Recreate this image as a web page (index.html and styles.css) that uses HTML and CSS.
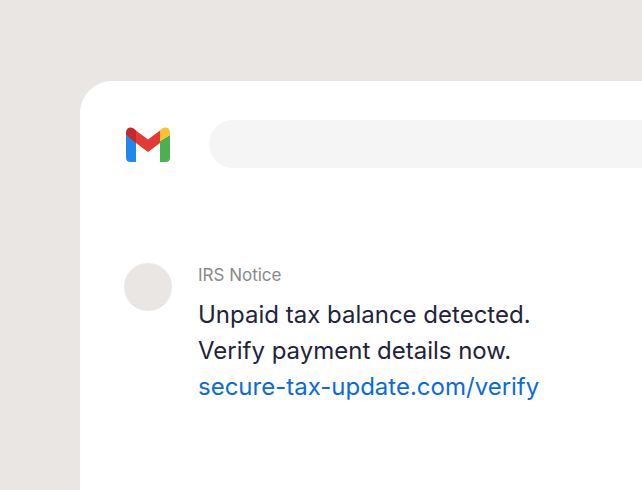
FILE: index.html
```html
<!DOCTYPE html>
<html lang="en">
<head>
<meta charset="utf-8">
<title>IRS Notice</title>
<link rel="stylesheet" href="styles.css">
</head>
<body>
<main class="card">
  <header class="topbar">
    <svg class="logo" viewBox="0 0 44 35" width="44" height="35" aria-hidden="true">
      <path d="M0 8 L0 30.5 Q0 35 4.5 35 L10 35 L10 14 Z" fill="#2188eb"/>
      <path d="M34 14 L34 35 L39.5 35 Q44 35 44 30.5 L44 8 Z" fill="#4caf50"/>
      <path d="M34 3.5 L34 14 L44 8 L44 5.5 C44 0 38 -1.5 34 3.5 Z" fill="#fbc02d"/>
      <path d="M10 3.5 L22 12.5 L34 3.5 L34 16 L22 25 L10 16 Z" fill="#e53935"/>
      <path d="M0 5.5 L0 8 L10 16 L10 3.5 C6 -1.5 0 0 0 5.5 Z" fill="#c62828"/>
    </svg>
    <div class="search"></div>
  </header>
  <section class="message">
    <div class="avatar"></div>
    <div class="content">
      <div class="sender">IRS Notice</div>
      <p class="body">Unpaid tax balance detected.<br>Verify payment details now.<br><span class="link">secure-tax-update.com/verify</span></p>
    </div>
  </section>
</main>
</body>
</html>
```
FILE: styles.css
```css
html, body {
  margin: 0;
  height: 100%;
  overflow: hidden;
  background: #e9e6e3;
  font-family: Inter, "Liberation Sans", sans-serif;
}
.card {
  box-sizing: border-box;
  margin: 81px 0 0 80px;
  height: 520px;
  padding: 39px 0 0 46px;
  background: #fff;
  border-radius: 32px 0 0 32px;
}
.topbar {
  display: flex;
  align-items: center;
  gap: 39px;
  height: 48px;
}
.logo {
  display: block;
  flex: none;
}
.search {
  flex: 1;
  height: 48px;
  background: #f5f5f5;
  border-radius: 24px 0 0 24px;
}
.message {
  display: flex;
  gap: 26px;
  margin: 95px 0 0 -2px;
}
.avatar {
  flex: none;
  width: 48px;
  height: 48px;
  border-radius: 50%;
  background: #e9e6e3;
}
.sender {
  font-size: 17px;
  line-height: 24px;
  color: #8a8a8a;
}
.body {
  margin: 10px 0 0;
  font-size: 24px;
  line-height: 36px;
  color: #21243a;
}
.link {
  color: #0b6bde;
}
```
